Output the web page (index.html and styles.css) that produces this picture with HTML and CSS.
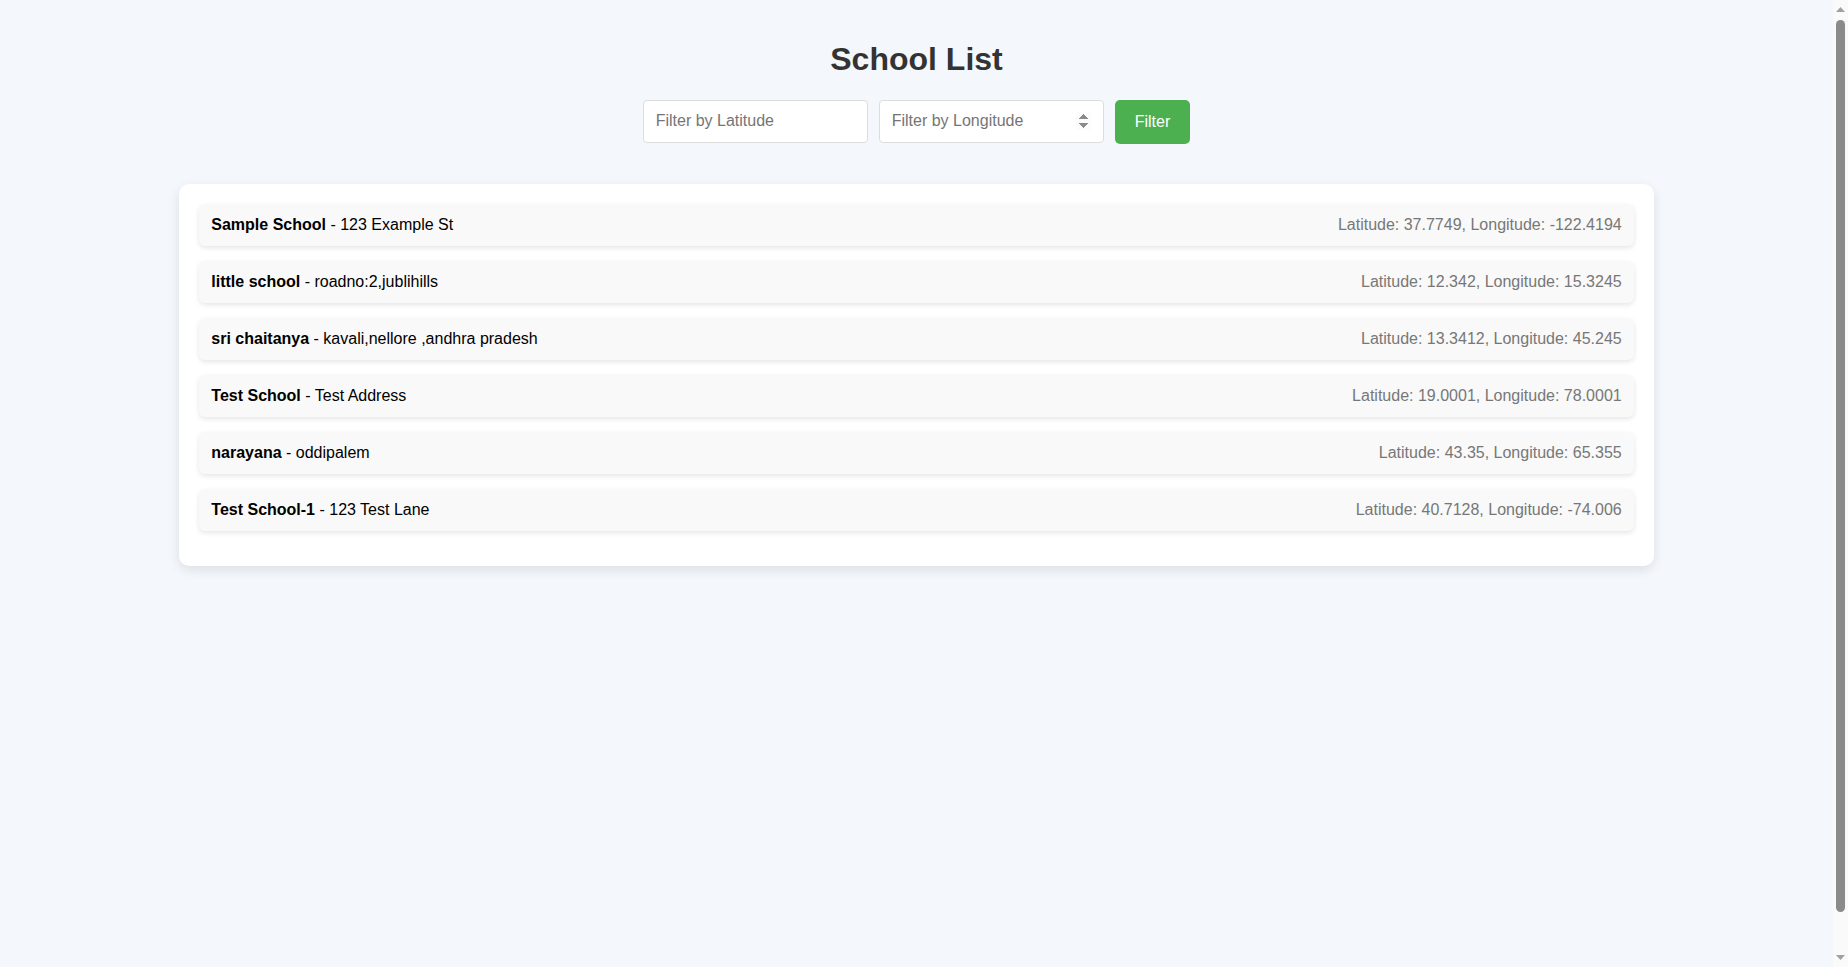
FILE: index.html
```html
<!DOCTYPE html>
<html lang="en">
<head>
<meta charset="utf-8">
<title>School List</title>
<link rel="stylesheet" href="styles.css">
</head>
<body>
  <h1 class="title">School List</h1>
  <div class="filters">
    <input class="field" type="number" placeholder="Filter by Latitude" aria-label="Filter by Latitude">
    <input class="field field-spin" type="number" placeholder="Filter by Longitude" aria-label="Filter by Longitude">
    <button class="btn" type="button">Filter</button>
  </div>
  <div class="card">
    <ul class="list">
      <li class="item"><span class="info"><strong>Sample School</strong> - 123 Example St</span><span class="coords">Latitude: 37.7749, Longitude: -122.4194</span></li>
      <li class="item"><span class="info"><strong>little school</strong> - roadno:2,jublihills</span><span class="coords">Latitude: 12.342, Longitude: 15.3245</span></li>
      <li class="item"><span class="info"><strong>sri chaitanya</strong> - kavali,nellore ,andhra pradesh</span><span class="coords">Latitude: 13.3412, Longitude: 45.245</span></li>
      <li class="item"><span class="info"><strong>Test School</strong> - Test Address</span><span class="coords">Latitude: 19.0001, Longitude: 78.0001</span></li>
      <li class="item"><span class="info"><strong>narayana</strong> - oddipalem</span><span class="coords">Latitude: 43.35, Longitude: 65.355</span></li>
      <li class="item"><span class="info"><strong>Test School-1</strong> - 123 Test Lane</span><span class="coords">Latitude: 40.7128, Longitude: -74.006</span></li>
    </ul>
  </div>
  <div class="scrollbar" aria-hidden="true">
    <svg class="sb-arrow" width="15" height="15" viewBox="0 0 15 15"><path d="M3 12 L7.5 7 L12 12 Z" fill="#a0a0a0"/></svg>
    <div class="sb-track"><div class="sb-thumb"></div></div>
    <svg class="sb-arrow" width="15" height="15" viewBox="0 0 15 15"><path d="M3 3 L7.5 8 L12 3 Z" fill="#a0a0a0"/></svg>
  </div>
</body>
</html>
```

FILE: styles.css
```css
html {
  background: #f4f7fb;
}
body {
  margin: 0;
  padding: 20px 35px 20px 20px;
  min-height: 100vh;
  font-family: "Liberation Sans", Arial, sans-serif;
  font-size: 16px;
  color: #000;
  background: #f4f7fb;
}
.title {
  font-size: 32px;
  font-weight: bold;
  color: #333;
  text-align: center;
  margin: 21.44px 0;
}
.filters {
  display: flex;
  justify-content: center;
  gap: 11px;
  margin-bottom: 40px;
}
.field {
  box-sizing: border-box;
  width: 225px;
  height: 43px;
  padding: 12px;
  border: 1px solid #ddd;
  border-radius: 4px;
  background: #fff;
  font-family: "Liberation Sans", Arial, sans-serif;
  font-size: 16px;
  color: #333;
  outline: none;
}
.field::placeholder {
  color: #757575;
}
.field::-webkit-inner-spin-button,
.field::-webkit-outer-spin-button {
  opacity: 0;
}
.field-spin::-webkit-inner-spin-button {
  opacity: 1;
}
.btn {
  height: 44px;
  padding: 12px 20px;
  border: none;
  border-radius: 5px;
  background: #4caf50;
  color: #fff;
  font-family: "Liberation Sans", Arial, sans-serif;
  font-size: 16px;
  cursor: pointer;
}
.card {
  width: 80%;
  margin: 0 auto;
  padding: 20px;
  background: #fff;
  border-radius: 10px;
  box-shadow: 0 4px 12px rgba(0, 0, 0, 0.1);
}
.list {
  list-style: none;
  margin: 0;
  padding: 0;
}
.item {
  display: flex;
  justify-content: space-between;
  align-items: center;
  padding: 12px;
  margin-bottom: 15px;
  background: #f9f9f9;
  border-radius: 6px;
  box-shadow: 0 2px 5px rgba(0, 0, 0, 0.1);
}
.coords {
  color: #777;
}
.scrollbar {
  position: fixed;
  top: 0;
  right: 0;
  bottom: 0;
  width: 15px;
  background: #fafafa;
  display: flex;
  flex-direction: column;
}
.sb-arrow {
  display: block;
  flex: none;
}
.sb-track {
  flex: 1;
  padding: 5px 3px 40px 3px;
  display: flex;
}
.sb-thumb {
  flex: 1;
  background: #8a8a8a;
  border-radius: 5px;
}
```
